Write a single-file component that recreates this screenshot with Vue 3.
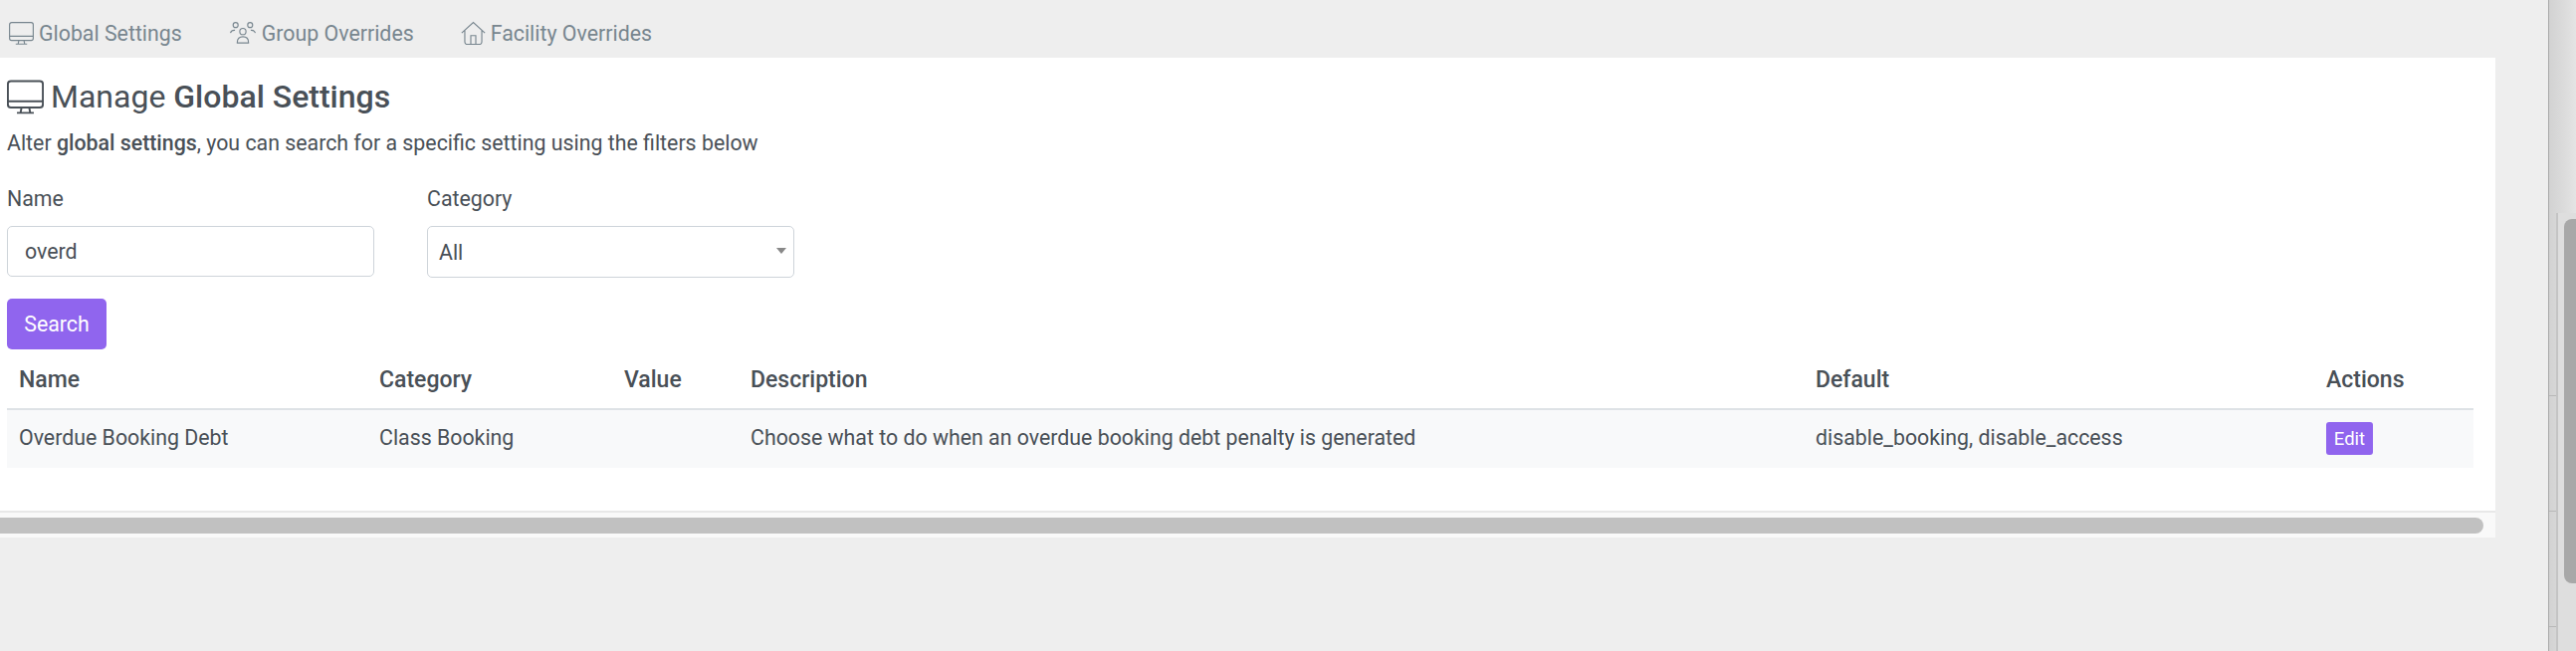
<script setup>
const tabs = [
  { label: 'Global Settings', icon: 'monitor' },
  { label: 'Group Overrides', icon: 'group' },
  { label: 'Facility Overrides', icon: 'house' },
]

const columns = ['Name', 'Category', 'Value', 'Description', 'Default', 'Actions']

const row = {
  name: 'Overdue Booking Debt',
  category: 'Class Booking',
  value: '',
  description: 'Choose what to do when an overdue booking debt penalty is generated',
  fallback: 'disable_booking, disable_access',
}
</script>

<template>
  <div class="page">
    <div class="main">
      <nav class="tabs">
        <a v-for="tab in tabs" :key="tab.label" class="tab">
          <svg v-if="tab.icon === 'monitor'" class="tab-icon" viewBox="0 0 24 24" fill="none" stroke="currentColor" stroke-width="1.1">
            <rect x="0.6" y="1.6" width="22.8" height="17.2" rx="2" />
            <path d="M0.6 14.8h22.8M9.5 18.8l-0.6 3.2M14.5 18.8l0.6 3.2M6.5 22.3h11" />
          </svg>
          <svg v-else-if="tab.icon === 'group'" class="tab-icon tab-icon-wide" viewBox="0 0 26 24" fill="none" stroke="currentColor" stroke-width="1.1">
            <circle cx="6" cy="4" r="2.4" />
            <circle cx="20" cy="4" r="2.4" />
            <circle cx="13" cy="10.2" r="3" />
            <path d="M1 11.6c0.6-1.8 2.2-2.8 4.4-2.6M25 11.6c-0.6-1.8-2.2-2.8-4.4-2.6" />
            <path d="M7.6 20.6c0-3.6 2.2-5.4 5.4-5.4s5.4 1.8 5.4 5.4v0.6H7.6z" />
          </svg>
          <svg v-else class="tab-icon" viewBox="0 0 24 24" fill="none" stroke="currentColor" stroke-width="1.1">
            <path d="M0.8 11.6L12 1.4l11.2 10.2M3.8 9.4v10.8a2.4 2.4 0 0 0 2.4 2.4h11.6a2.4 2.4 0 0 0 2.4-2.4V9.4" />
            <path d="M9.6 22.6v-8.4h4.8v8.4" />
          </svg>
          <span>{{ tab.label }}</span>
        </a>
      </nav>

      <section class="panel">
        <div class="panel-body">
          <h1 class="title">
            <svg class="title-icon" viewBox="0 0 24 24" fill="none" stroke="currentColor" stroke-width="1.25">
              <rect x="0.6" y="1.6" width="22.8" height="17.2" rx="2" />
              <path d="M0.6 14.8h22.8M9.5 18.8l-0.6 3.2M14.5 18.8l0.6 3.2M6.5 22.3h11" />
            </svg>
            <span>Manage <strong>Global Settings</strong></span>
          </h1>
          <p class="intro">Alter <strong>global settings</strong>, you can search for a specific setting using the filters below</p>

          <div class="filters">
            <div class="field">
              <label>Name</label>
              <input class="control" type="text" value="overd" />
            </div>
            <div class="field">
              <label>Category</label>
              <div class="control select">
                <span>All</span>
                <i class="caret"></i>
              </div>
            </div>
          </div>

          <button class="btn">Search</button>

          <table class="grid">
            <thead>
              <tr>
                <th v-for="col in columns" :key="col">{{ col }}</th>
              </tr>
            </thead>
            <tbody>
              <tr>
                <td>{{ row.name }}</td>
                <td>{{ row.category }}</td>
                <td>{{ row.value }}</td>
                <td>{{ row.description }}</td>
                <td>{{ row.fallback }}</td>
                <td><button class="btn btn-sm">Edit</button></td>
              </tr>
            </tbody>
          </table>
        </div>
        <div class="hscroll">
          <div class="hthumb"></div>
        </div>
      </section>
    </div>

    <aside class="vscroll">
      <div class="vtrack">
        <div class="vstrip"></div>
        <div class="vlane">
          <div class="vthumb"></div>
        </div>
      </div>
    </aside>
  </div>
</template>

<style>
html,
body {
  margin: 0;
  background: #eeeeee;
  overflow: hidden;
}
</style>

<style scoped>
.page {
  display: flex;
  width: 2588px;
  height: 654px;
  background: #eeeeee;
  font-family: Roboto, "Liberation Sans", sans-serif;
  color: #495057;
  overflow: hidden;
}

.main {
  width: 2507px;
  margin-right: 53px;
  flex: none;
}

.tabs {
  display: flex;
  height: 58px;
  align-items: center;
  padding: 8px 0 0 9px;
  box-sizing: border-box;
  gap: 47px;
}

.tab {
  display: flex;
  align-items: center;
  gap: 5px;
  font-size: 21.33px;
  color: #78868f;
}

.tab-icon {
  width: 25px;
  height: 25px;
  flex: none;
}

.tab-icon-wide {
  width: 28px;
}

.panel {
  background: #fff;
  height: 482px;
  display: flex;
  flex-direction: column;
}

.panel-body {
  flex: 1;
  padding: 20px 22px 0 7px;
}

.title {
  display: flex;
  align-items: center;
  gap: 7px;
  margin: 0;
  font-size: 32px;
  font-weight: 400;
  line-height: 38px;
  color: #495057;
}

.title strong {
  font-weight: 500;
}

.title-icon {
  width: 37px;
  height: 37px;
  flex: none;
}

.intro {
  margin: 13px 0 0;
  font-size: 21.33px;
  line-height: 30px;
}

.intro strong {
  font-weight: 500;
}

.filters {
  display: flex;
  gap: 53px;
  margin-top: 26px;
}

.field {
  display: flex;
  flex-direction: column;
  width: 369px;
}

.field label {
  font-size: 21.33px;
  line-height: 30px;
  margin-bottom: 12px;
}

.control {
  box-sizing: border-box;
  width: 100%;
  height: 51px;
  border: 1px solid #ced4da;
  border-radius: 5px;
  background: #fff;
  padding: 0 17px;
  font-family: inherit;
  font-size: 21.33px;
  color: #495057;
  outline: none;
}

.select {
  display: flex;
  align-items: center;
  justify-content: space-between;
  height: 52px;
  padding: 0 7px 0 11px;
}

.select span {
  margin-top: 1px;
}

.caret {
  width: 0;
  height: 0;
  border-left: 5px solid transparent;
  border-right: 5px solid transparent;
  border-top: 6px solid #888888;
  margin-bottom: 2px;
}

.btn {
  display: block;
  width: 100px;
  height: 51px;
  margin-top: 21px;
  border: 0;
  border-radius: 5px;
  background: #9065ee;
  color: #fff;
  font-family: inherit;
  font-size: 21.33px;
  padding: 0;
}

.btn-sm {
  width: 47px;
  height: 33px;
  margin: 2px 0 0;
  font-size: 18.5px;
  border-radius: 3px;
}

.grid {
  width: 2478px;
  margin-top: 5px;
  border-collapse: collapse;
  table-layout: fixed;
  font-size: 21.33px;
  color: #495057;
}

.grid th {
  box-sizing: border-box;
  height: 55px;
  padding: 0 12px 3px;
  text-align: left;
  font-weight: 500;
  font-size: 23px;
  border-bottom: 2px solid #dee2e6;
}

.grid td {
  box-sizing: border-box;
  height: 59px;
  padding: 0 12px 3px;
  background: #f8f9fa;
}

.grid th:nth-child(1) { width: 362px; }
.grid th:nth-child(2) { width: 246px; }
.grid th:nth-child(3) { width: 127px; }
.grid th:nth-child(4) { width: 1070px; }
.grid th:nth-child(5) { width: 513px; }

.hscroll {
  height: 27px;
  box-sizing: border-box;
  background: #f9f9f9;
  border-top: 2px solid #e8e8e8;
  padding-top: 5px;
  flex: none;
}

.hthumb {
  width: 2495px;
  height: 16px;
  background: #c1c1c1;
  border-radius: 0 8px 8px 0;
}

.vscroll {
  width: 28px;
  flex: none;
  box-sizing: border-box;
  border-left: 1px solid #a9a9a9;
  background: linear-gradient(90deg, #d2d2d2, #dcdcdc 60%, #e4e4e4);
  padding-top: 214px;
}

.vtrack {
  display: flex;
  height: 440px;
}

.vstrip {
  width: 7px;
  flex: none;
  background-image: linear-gradient(
    transparent 183px,
    #b8b8b8 183px,
    #b8b8b8 184px,
    transparent 184px,
    transparent 299px,
    #b8b8b8 299px,
    #b8b8b8 300px,
    transparent 300px,
    transparent 415px,
    #b8b8b8 415px,
    #b8b8b8 416px,
    transparent 416px
  );
}

.vlane {
  flex: 1;
  box-sizing: border-box;
  border-left: 2px solid #c4c4c4;
  padding: 6px 0 0 6px;
  background: #dedede;
}

.vthumb {
  height: 366px;
  background: #a8a8a8;
  border-radius: 8px 0 0 8px;
}
</style>
